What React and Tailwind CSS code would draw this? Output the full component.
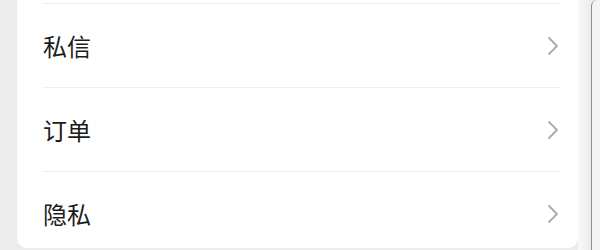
const items = ["私信", "订单", "隐私"];

const Chevron = () => (
  <svg width="12" height="20" viewBox="0 0 12 20" fill="none">
    <path d="M2 2 L10 10 L2 18" stroke="#ababab" strokeWidth="1.8" strokeLinecap="round" strokeLinejoin="round" />
  </svg>
);

export default function App() {
  return (
    <div
      className="flex w-[600px] h-[250px] bg-[#ececec] overflow-hidden"
      style={{ fontFamily: '"Noto Sans CJK SC", "Noto Sans", sans-serif' }}
    >
      {/* left gap */}
      <div className="w-[17px] shrink-0" />

      {/* card */}
      <div className="w-[561px] h-[248px] bg-white rounded-b-[10px] overflow-hidden shrink-0">
        <div className="ml-[26px] mr-[18px] mt-[3px] border-t border-[#efefef]" />
        {items.map((label, i) => (
          <div key={label}>
            <div className="flex items-center justify-between h-[83px] pl-[26px] pr-[19px]">
              <span className="text-[24px] leading-none text-[#1c1c1c]">{label}</span>
              <Chevron />
            </div>
            {i < items.length - 1 && (
              <div className="ml-[26px] mr-[18px] border-t border-[#efefef]" />
            )}
          </div>
        ))}
      </div>

      {/* right edge */}
      <div className="flex flex-1">
        <div className="w-[13px] bg-gradient-to-r from-[#fafafa] to-[#ececec]" />
        <div className="flex-1 border-l border-[#8f8f8f] rounded-tl-[6px] bg-[#f4f4f4]" />
      </div>
    </div>
  );
}
